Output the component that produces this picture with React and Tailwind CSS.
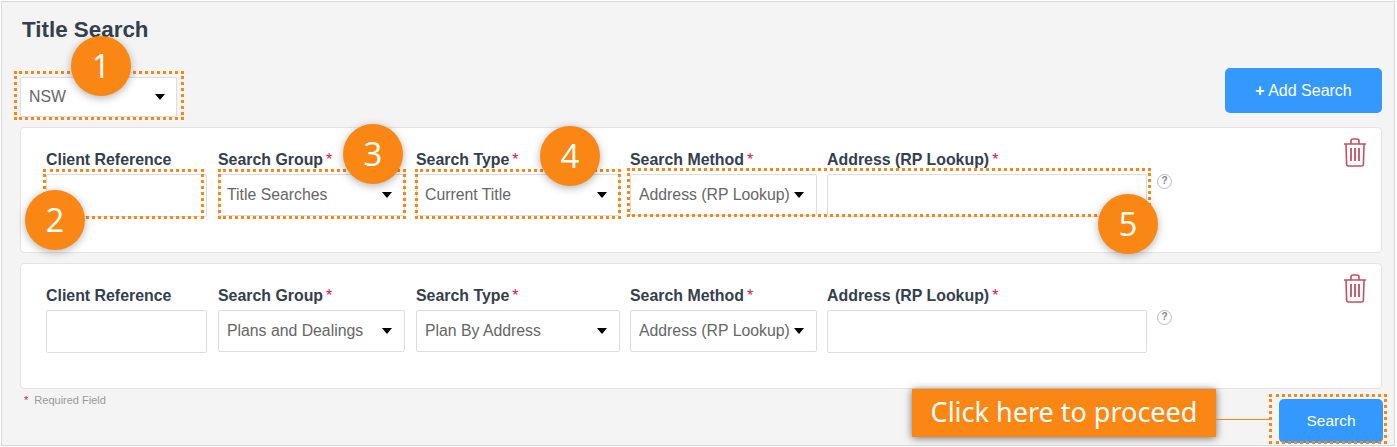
import React from 'react';

const ORANGE = 'bg-[#fa8614]';

function Caret(){
  return <span className="w-0 h-0 shrink-0 border-x-[5px] border-x-transparent border-t-[6px] border-t-black" />;
}

function Select({ value, className, pad='pl-2 pr-[12px]' }){
  return (
    <div className={`bg-white border border-[#ddd] rounded-[2px] flex items-center justify-between ${pad} ${className}`}>
      <span className="text-[15.8px] text-[#666] whitespace-nowrap">{value}</span>
      <Caret />
    </div>
  );
}

function Label({ text, required }){
  return (
    <div className="h-[19px] text-[15.9px] leading-[19px] font-bold text-[#333f4d] whitespace-nowrap">
      {text}{required && <span className="text-[#d6164f] font-normal ml-[3px]">*</span>}
    </div>
  );
}

function Trash(){
  return (
    <svg width="24" height="29" viewBox="0 0 24 29" fill="none" stroke="#c4505e" strokeWidth="1.6" className="mt-[10px] mr-[14px] shrink-0">
      <path d="M1 6h22M8 6V3a2 2 0 0 1 2-2h4a2 2 0 0 1 2 2v3" />
      <path d="M3 6l.6 20a2 2 0 0 0 2 2h12.8a2 2 0 0 0 2-2L21 6" />
      <path d="M8 10v13M12 10v13M16 10v13" strokeWidth="1.8" />
    </svg>
  );
}

function Help(){
  return (
    <span className="ml-[10px] mt-[46px] w-[15px] h-[15px] rounded-full border-[1.5px] border-[#bbb] text-[#888] text-[10px] leading-[12px] font-bold text-center shrink-0">?</span>
  );
}

function Dots({ className }){
  return <span className={`absolute z-10 border-[3px] border-dotted border-[#fa8614] pointer-events-none ${className}`} />;
}

function Badge({ n, className }){
  return (
    <span className={`absolute z-20 w-[60px] h-[60px] rounded-full ${ORANGE} text-white text-[33px] flex items-center justify-center shadow-[0_2px_8px_rgba(0,0,0,0.3)] font-['Open_Sans',sans-serif] ${className}`}>{n}</span>
  );
}

function SearchRow({ group, type, first }){
  return (
    <div className="h-[126px] bg-white border border-[#e4e4e4] rounded-[4px] flex items-start pl-[25px]">
      <div className="w-[161px] mt-[22px] relative">
        <Label text="Client Reference" />
        <div className="h-[43px] mt-[5px] bg-white border border-[#ddd] rounded-[2px]" />
        {first && <Dots className="-left-[3px] right-[3px] top-[19px] h-[50px]" />}
        {first && <Badge n="2" className="-left-[21px] top-[40px]" />}
      </div>
      <div className="w-[187px] ml-[11px] mt-[22px] relative">
        <Label text="Search Group" required />
        <Select value={group} className="h-[42px] mt-[5px]" />
        {first && <Dots className="left-0 -right-[1px] top-[19px] h-[50px]" />}
        {first && <Badge n="3" className="left-[125px] -top-[26px]" />}
      </div>
      <div className="w-[204px] ml-[11px] mt-[22px] relative">
        <Label text="Search Type" required />
        <Select value={type} className="h-[42px] mt-[5px]" />
        {first && <Dots className="-left-[1px] -right-[1px] top-[19px] h-[50px]" />}
        {first && <Badge n="4" className="left-[124px] -top-[24px]" />}
      </div>
      <div className="w-[187px] ml-[10px] mt-[22px] relative">
        <Label text="Search Method" required />
        <Select value="Address (RP Lookup)" className="h-[42px] mt-[5px]" />
        {first && <Dots className="-left-[3px] w-[524px] top-[18px] h-[49px]" />}
      </div>
      <div className="w-[320px] ml-[10px] mt-[22px] relative">
        <Label text="Address (RP Lookup)" required />
        <div className="h-[43px] mt-[5px] bg-white border border-[#ddd] rounded-[2px]" />
        {first && <Badge n="5" className="left-[271px] top-[44px]" />}
      </div>
      <Help />
      <div className="flex-1" />
      <Trash />
    </div>
  );
}

export default function App(){
  return (
    <div className="w-[1397px] h-[447px] bg-white pt-[1px] pl-[1px] font-['Liberation_Sans',Arial,sans-serif] overflow-hidden">
      <div className="w-[1394px] h-[445px] bg-[#f4f4f4] border border-[#d9d9d9] pl-[18px] pr-[12px] flex flex-col">
        <h1 className="mt-[15px] ml-[2px] h-[25px] text-[22.4px] leading-[25px] font-bold text-[#333f4d]">Title Search</h1>
        <div className="mt-[11px] h-[74px] flex justify-between items-start">
          <div className="relative mt-[24px]">
            <Select value="NSW" className="w-[157px] h-[40px]" pad="pl-[8px] pr-[11px]" />
            <Dots className="-left-[6px] -right-[7px] -top-[6px] h-[49px]" />
            <Badge n="1" className="left-[51px] -top-[41px]" />
          </div>
          <button className="mt-[15px] w-[157px] h-[45px] bg-[#3399ff] rounded-[5px] text-white text-[16px]">
            <span className="font-bold">+</span> Add Search
          </button>
        </div>
        <div className="flex flex-col gap-[10px]">
          <SearchRow group="Title Searches" type="Current Title" first />
          <SearchRow group="Plans and Dealings" type="Plan By Address" />
        </div>
        <div className="flex justify-between items-start -mr-[5px]">
          <div className="mt-[3px] ml-[4px] text-[11px] text-[#999]"><span className="text-[#d6164f] mr-[3px]">*</span> Required Field</div>
          <div className="flex items-start">
            <div className={`${ORANGE} w-[304px] h-[48px] pb-[2px] flex items-center justify-center text-white text-[27px] font-['Noto_Sans',sans-serif] shadow-[0_1px_8px_rgba(0,0,0,0.55)] whitespace-nowrap`}>Click here to proceed</div>
            <span className="w-[53px] h-[1px] mt-[30px] bg-[#fa8614]" />
            <div className="relative w-[118px] h-[50px] flex items-end justify-end pr-[4px] pb-[1px] mt-[5px]">
              <Dots className="inset-0" />
              <button className="w-[104px] h-[44px] bg-[#3399ff] rounded-[5px] text-white text-[15.5px]">Search</button>
            </div>
          </div>
        </div>
      </div>
    </div>
  );
}
